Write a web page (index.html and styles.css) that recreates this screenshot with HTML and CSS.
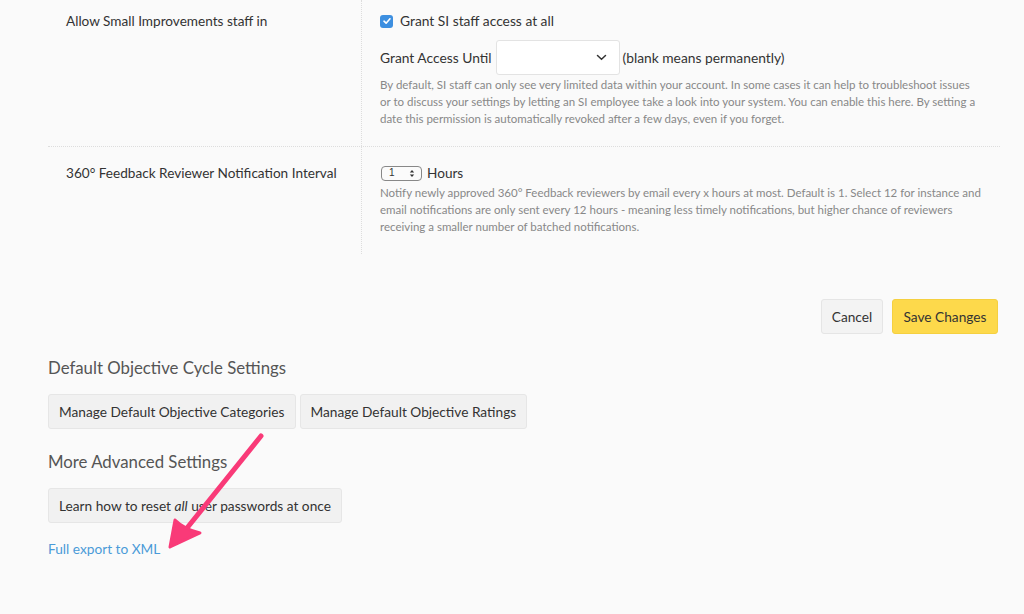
FILE: index.html
```html
<!DOCTYPE html>
<html>
<head>
<meta charset="utf-8">
<link rel="stylesheet" href="styles.css">
</head>
<body>
<div class="page">
  <div class="settings">
    <div class="row first">
      <div class="label">Allow Small Improvements staff in</div>
      <div class="value">
        <label class="check-line"><span class="checkbox"><svg width="10" height="10" viewBox="0 0 10 10"><path d="M2 5.2 L4.1 7.2 L8 2.8" fill="none" stroke="#fff" stroke-width="1.6" stroke-linecap="round" stroke-linejoin="round"/></svg></span>Grant SI staff access at all</label>
        <div class="until-line">
          <span>Grant Access Until</span>
          <span class="select-big"><svg width="11" height="7" viewBox="0 0 11 7"><path d="M1.5 1.5 L5.5 5.2 L9.5 1.5" fill="none" stroke="#333" stroke-width="1.5" stroke-linecap="round"/></svg></span>
          <span>(blank means permanently)</span>
        </div>
        <p class="desc">By default, SI staff can only see very limited data within your account. In some cases it can help to troubleshoot issues<br>or to discuss your settings by letting an SI employee take a look into your system. You can enable this here. By setting a<br>date this permission is automatically revoked after a few days, even if you forget.</p>
      </div>
    </div>
    <div class="row second">
      <div class="label">360° Feedback Reviewer Notification Interval</div>
      <div class="value">
        <div class="hours-line">
          <span class="select-small"><span>1</span><svg width="6" height="9" viewBox="0 0 6 9"><path d="M0.8 3.6 L3 1 L5.2 3.6 Z M0.8 5.4 L3 8 L5.2 5.4 Z" fill="#333"/></svg></span>
          <span>Hours</span>
        </div>
        <p class="desc narrow">Notify newly approved 360° Feedback reviewers by email every x hours at most. Default is 1. Select 12 for instance and<br>email notifications are only sent every 12 hours - meaning less timely notifications, but higher chance of reviewers<br>receiving a smaller number of batched notifications.</p>
      </div>
    </div>
  </div>

  <div class="actions">
    <button class="btn cancel">Cancel</button>
    <button class="btn save">Save Changes</button>
  </div>

  <h2 class="section-title">Default Objective Cycle Settings</h2>
  <div class="btn-group">
    <button class="btn gray">Manage Default Objective Categories</button>
    <button class="btn gray">Manage Default Objective Ratings</button>
  </div>

  <h2 class="section-title tight">More Advanced Settings</h2>
  <div class="btn-group">
    <button class="btn gray">Learn how to reset <em>all</em> user passwords at once</button>
  </div>

  <a class="export" href="#">Full export to XML</a>

  <svg class="arrow" width="120" height="130" viewBox="0 0 120 130">
    <path d="M111 11 L33 108" stroke="#f93a78" stroke-width="5" stroke-linecap="round" fill="none"/>
    <path d="M20 122 L25 95 Q34 104 50 108 Z" fill="#f93a78" stroke="#f93a78" stroke-width="3" stroke-linejoin="round"/>
  </svg>
</div>
</body>
</html>
```

FILE: styles.css
```css
* { box-sizing: border-box; }
html, body {
  margin: 0;
  padding: 0;
  background: #fafafa;
  font-family: "Lato", "Liberation Sans", sans-serif;
  color: #333;
}
.page {
  position: relative;
  width: 952px;
  margin-left: 48px;
}
.settings { display: flex; flex-direction: column; }
.row {
  display: flex;
}
.row.first { border-bottom: 1px dotted #ddd; }
.label {
  width: 314px;
  padding-left: 18px;
  font-size: 13.6px;
  line-height: 20px;
  border-right: 1px dotted #ddd;
  flex-shrink: 0;
}
.row.first .label { padding-top: 11px; }
.row.second .label { padding-top: 16px; }
.value {
  flex: 1;
  padding-left: 18px;
}
.row.first .value { padding: 11px 0 19px 18px; }
.row.second .value { padding: 16px 0 19px 18px; }
.check-line {
  display: flex;
  align-items: center;
  gap: 7px;
  font-size: 13.8px;
  line-height: 20px;
}
.checkbox {
  width: 13px;
  height: 13px;
  border-radius: 3px;
  background: #3d8fe0;
  display: flex;
  align-items: center;
  justify-content: center;
}
.until-line {
  display: flex;
  align-items: center;
  margin-top: 9px;
  font-size: 13.8px;
}
.select-big {
  width: 124px;
  height: 35px;
  margin: 0 3px 0 4px;
  background: #fff;
  border: 1px solid #e3e3e3;
  border-radius: 3px;
  display: flex;
  align-items: center;
  justify-content: flex-end;
  padding-right: 12px;
}
.desc {
  margin: 1px 0 0;
  font-size: 11.5px;
  line-height: 17px;
  color: #888;
  white-space: nowrap;
}
.narrow { margin-top: 1px; }
.hours-line {
  display: flex;
  align-items: center;
  gap: 5px;
  font-size: 13.6px;
  line-height: 20px;
}
.select-small {
  width: 41px;
  height: 15px;
  margin-left: 1px;
  border: 1px solid #888;
  border-radius: 4px;
  background: #fbfbfb;
  display: flex;
  align-items: center;
  justify-content: space-between;
  padding: 0 6px 0 7px;
  font-size: 10px;
  font-family: "Liberation Sans", sans-serif;
}
.actions {
  display: flex;
  justify-content: flex-end;
  gap: 9px;
  margin-top: 45px;
  padding-right: 2px;
}
.btn {
  font-family: "Lato", "Liberation Sans", sans-serif;
  font-size: 13.7px;
  height: 35px;
  padding: 0 10px;
  border-radius: 3px;
  color: #333;
  cursor: pointer;
}
.cancel {
  background: #f3f3f3;
  border: 1px solid #e5e5e5;
  width: 62px;
  padding: 0;
}
.save {
  background: #fdd94b;
  border: 1px solid #f5d040;
  width: 106px;
  padding: 0;
}
.section-title {
  font-weight: normal;
  font-size: 16.8px;
  line-height: 22px;
  color: #555;
  margin: 23px 0 0;
}
.section-title.tight { margin-top: 22px; }
.btn-group {
  display: flex;
  gap: 4px;
  margin-top: 15px;
}
.gray {
  background: #f1f1f1;
  border: 1px solid #e6e6e6;
}
.gray em { font-style: italic; }
.export {
  display: block;
  margin-top: 17px;
  font-size: 13.7px;
  line-height: 18px;
  color: #4a9ad8;
  text-decoration: none;
}
.arrow {
  position: absolute;
  left: 102px;
  top: 425px;
}
```
